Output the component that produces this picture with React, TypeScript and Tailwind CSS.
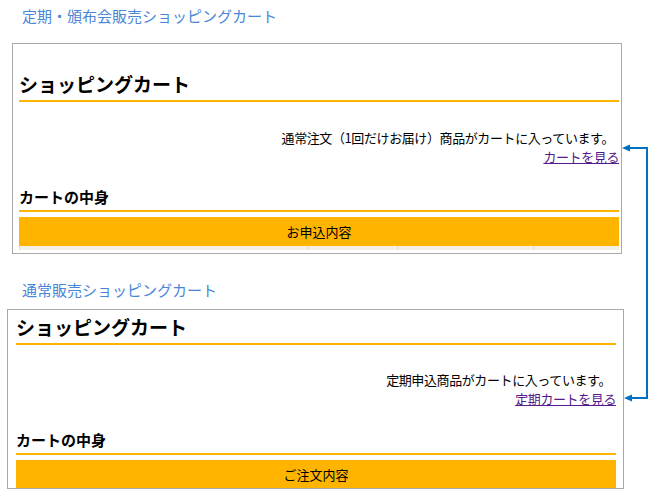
import React from "react";

function Cart({
  message,
  linkText,
  headerText,
  first,
}: {
  message: string;
  linkText: string;
  headerText: string;
  first: boolean;
}) {
  return (
    <div className="flex flex-col">
      <h2
        className={
          "text-[19px] leading-[28px] font-bold text-black pb-[2px] border-b-2 border-[#ffb400] " +
          (first ? "mt-[26px]" : "mt-[3px]")
        }
      >
        ショッピングカート
      </h2>
      <div
        className={
          "flex flex-col items-end text-[13px] leading-[19px] tracking-[-0.4px] " +
          (first ? "mt-[26px]" : "mt-[25px]")
        }
      >
        <p className="text-black pr-[5px]">{message}</p>
        <a href="#" className="text-[#551a8b] underline">
          {linkText}
        </a>
      </div>
      <h3
        className={
          "text-[15px] leading-[20px] font-bold text-black pb-[3px] border-b-2 border-[#ffb400] " +
          (first ? "mt-[21px]" : "mt-[22px]")
        }
      >
        カートの中身
      </h3>
      <div className="mt-[5px] h-[29px] bg-[#ffb400] flex items-center justify-center text-[13px] text-black">
        {headerText}
      </div>
      <div className="h-[4px] bg-[#f3efe6] grid grid-cols-[288px_90px_136px_1fr]">
        <div className="border-l border-[#dddddd]" />
        <div className="border-l border-[#dddddd]" />
        <div className="border-l border-[#dddddd]" />
        <div className="border-l border-[#dddddd]" />
      </div>
    </div>
  );
}

export default function App() {
  return (
    <div className="relative w-[662px] h-[503px] bg-white overflow-hidden font-['Noto_Sans_CJK_JP','Noto_Sans',sans-serif]">
      <div className="flex flex-col">
        <div className="ml-[22px] mt-[5px] text-[15px] leading-[22px] text-[#4a86d8]">
          定期・頒布会販売ショッピングカート
        </div>
        <div className="ml-[12px] mt-[16px] w-[610px] border border-[#a9a9a9] pl-[6px] pr-[2px] pb-[3px]">
          <Cart
            first
            message="通常注文（1回だけお届け）商品がカートに入っています。"
            linkText="カートを見る"
            headerText="お申込内容"
          />
        </div>
        <div className="ml-[22px] mt-[25px] text-[15px] leading-[22px] text-[#4a86d8]">
          通常販売ショッピングカート
        </div>
        <div className="ml-[7px] mt-[8px] w-[617px] h-[180px] overflow-hidden border border-[#a9a9a9] pl-[8px] pr-[7px]">
          <Cart
            first={false}
            message="定期申込商品がカートに入っています。"
            linkText="定期カートを見る"
            headerText="ご注文内容"
          />
        </div>
      </div>
      <svg className="absolute left-0 top-0" width="662" height="503" viewBox="0 0 662 503">
        <path d="M647 148 V398" stroke="#0070c0" strokeWidth="2" fill="none" />
        <path d="M629 148 H648" stroke="#0070c0" strokeWidth="2" fill="none" />
        <path d="M631 398 H648" stroke="#0070c0" strokeWidth="2" fill="none" />
        <polygon points="622,148 630,144.5 630,151.5" fill="#0070c0" />
        <polygon points="624,398 632,394.5 632,401.5" fill="#0070c0" />
      </svg>
    </div>
  );
}
